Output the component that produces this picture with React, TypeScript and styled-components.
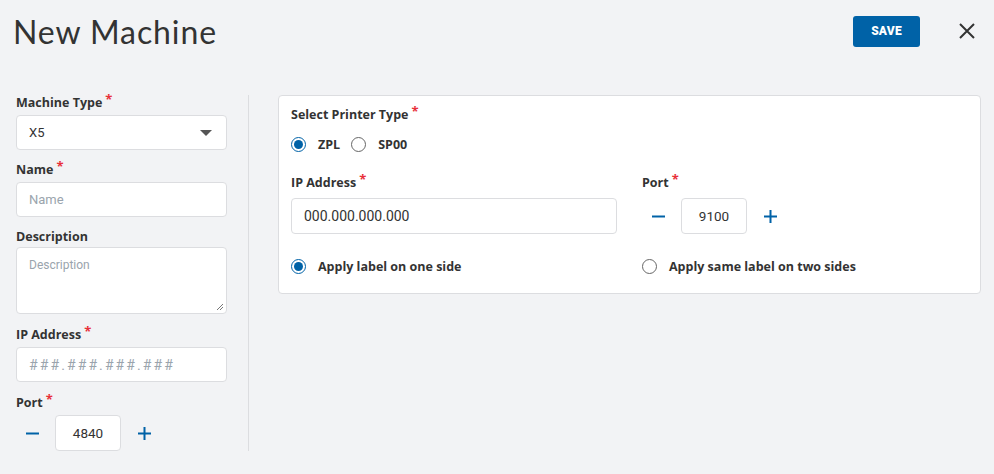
import React from "react";
import styled, { createGlobalStyle } from "styled-components";

const Global = createGlobalStyle`
  html, body { margin: 0; padding: 0; background: #f2f3f5; }
  body { font-family: "Open Sans", "Lato", sans-serif; color: #333; }
  * { box-sizing: border-box; }
`;

const Page = styled.div`
  width: 994px;
  height: 474px;
  background: #f2f3f5;
  padding: 0 0 0 16px;
`;

const Header = styled.div`
  display: flex;
  align-items: center;
  height: 64px;
  margin-left: -3px;
`;

const Title = styled.h1`
  flex: 1;
  margin: 0;
  font-family: "Lato", sans-serif;
  font-weight: 400;
  font-size: 32px;
  letter-spacing: 0.9px;
  color: #333;
  position: relative;
  top: -1px;
`;

const SaveButton = styled.button`
  width: 67px;
  height: 31px;
  border: none;
  border-radius: 3px;
  background: #0062a7;
  color: #fff;
  font-family: "Roboto", sans-serif;
  font-weight: 900;
  font-size: 12px;
  letter-spacing: 0.2px;
  margin-right: 38px;
  margin-top: -2px;
`;

const CloseButton = styled.button`
  width: 18px;
  height: 18px;
  border: none;
  background: transparent;
  padding: 0;
  margin-right: 18px;
  margin-top: -2px;
  display: flex;
  align-items: center;
  justify-content: center;
`;

const Body = styled.div`
  display: flex;
  margin-top: 31px;
`;

const LeftCol = styled.div`
  width: 211px;
  display: flex;
  flex-direction: column;
`;

const Divider = styled.div`
  width: 1px;
  background: #dcdde0;
  margin: 0 29px 0 21px;
  height: 356px;
`;

const Field = styled.div<{ $gap?: number }>`
  display: flex;
  flex-direction: column;
  margin-bottom: ${(p) => p.$gap ?? 12}px;
`;

const Label = styled.label<{ $mb?: number }>`
  font-family: "Open Sans", sans-serif;
  font-weight: 700;
  font-size: 12.5px;
  color: #333;
  line-height: 16px;
  height: 16px;
  margin-bottom: ${(p) => p.$mb ?? 4}px;
  display: flex;
`;

const Req = styled.span`
  color: #e8303a;
  font-size: 13px;
  margin-left: 3px;
  line-height: 10px;
  position: relative;
  top: -1px;
`;

const Box = styled.div<{ $h?: number; $placeholder?: boolean; $mono?: boolean; $fs?: number }>`
  height: ${(p) => p.$h ?? 35}px;
  background: #fff;
  border: 1px solid #dcdde0;
  border-radius: 4px;
  display: flex;
  align-items: center;
  padding: 0 12px;
  font-family: "Roboto", sans-serif;
  font-size: ${(p) => p.$fs ?? 13}px;
  color: ${(p) => (p.$placeholder ? "#9aa4ad" : "#333")};
  letter-spacing: ${(p) => (p.$mono ? "2.1px" : "0")};
  position: relative;
`;

const SelectBox = styled(Box)`
  justify-content: space-between;
  padding-right: 14px;
`;

const TextArea = styled(Box)`
  align-items: flex-start;
  padding-top: 10px;
  font-size: 12px;
`;

const Grip = styled.svg`
  position: absolute;
  right: 2px;
  bottom: 2px;
`;

const Stepper = styled.div`
  display: flex;
  align-items: center;
  height: 36px;
`;

const StepBtn = styled.button<{ $side: "minus" | "plus" }>`
  height: 36px;
  border: none;
  background: transparent;
  padding: ${(p) => (p.$side === "minus" ? "0 16px 0 10px" : "0 0 0 17px")};
  display: flex;
  align-items: center;
`;

const StepValue = styled.div`
  width: 66px;
  height: 36px;
  background: #fff;
  border: 1px solid #dcdde0;
  border-radius: 4px;
  display: flex;
  align-items: center;
  justify-content: center;
  font-family: "Roboto", sans-serif;
  font-size: 13.5px;
  color: #333;
`;

const Card = styled.div`
  width: 703px;
  height: 199px;
  background: #fff;
  border: 1px solid #dcdde0;
  border-radius: 4px;
  padding: 11px 12px 0 12px;
`;

const RadioRow = styled.div`
  display: flex;
  align-items: center;
  height: 24px;
  margin-top: 9px;
`;

const RadioItem = styled.div`
  display: flex;
  align-items: center;
  margin-right: 11px;
  height: 16px;
`;

const RadioCircle = styled.span<{ $checked?: boolean }>`
  width: 15px;
  height: 15px;
  border-radius: 50%;
  border: 1px solid ${(p) => (p.$checked ? "#0062a7" : "#666")};
  display: flex;
  align-items: center;
  justify-content: center;
  margin-right: 12px;
  &::after {
    content: "";
    width: 9px;
    height: 9px;
    border-radius: 50%;
    background: ${(p) => (p.$checked ? "#0062a7" : "transparent")};
  }
`;

const RadioLabel = styled.span`
  font-family: "Open Sans", sans-serif;
  font-weight: 700;
  font-size: 12.5px;
  color: #333;
`;

const Grid = styled.div<{ $top: number }>`
  display: grid;
  grid-template-columns: 326px 326px;
  column-gap: 25px;
  margin-top: ${(p) => p.$top}px;
`;

const Minus = () => (
  <svg width="13" height="13" viewBox="0 0 13 13">
    <path d="M0 6.5h13" stroke="#0062a7" strokeWidth="2" />
  </svg>
);
const Plus = () => (
  <svg width="13" height="13" viewBox="0 0 13 13">
    <path d="M0 6.5h13M6.5 0v13" stroke="#0062a7" strokeWidth="2" />
  </svg>
);

const PortControl = ({ value }: { value: string }) => (
  <Stepper>
    <StepBtn $side="minus">
      <Minus />
    </StepBtn>
    <StepValue>{value}</StepValue>
    <StepBtn $side="plus">
      <Plus />
    </StepBtn>
  </Stepper>
);

export default function App() {
  return (
    <Page>
      <Global />
      <Header>
        <Title>New Machine</Title>
        <SaveButton>SAVE</SaveButton>
        <CloseButton aria-label="close">
          <svg width="16" height="16" viewBox="0 0 16 16">
            <path d="M1 1L15 15M15 1L1 15" stroke="#333" strokeWidth="2" />
          </svg>
        </CloseButton>
      </Header>
      <Body>
        <LeftCol>
          <Field>
            <Label>
              Machine Type<Req>*</Req>
            </Label>
            <SelectBox>
              <span>X5</span>
              <svg width="12" height="6" viewBox="0 0 12 6">
                <path d="M0 0h12L6 6z" fill="#555" />
              </svg>
            </SelectBox>
          </Field>
          <Field>
            <Label>
              Name<Req>*</Req>
            </Label>
            <Box $placeholder>Name</Box>
          </Field>
          <Field $gap={13}>
            <Label $mb={2}>Description</Label>
            <TextArea $h={67} $placeholder>
              Description
              <Grip width="8" height="8" viewBox="0 0 8 8">
                <path d="M7 1L1 7M7 4L4 7" stroke="#777" strokeWidth="1" />
              </Grip>
            </TextArea>
          </Field>
          <Field $gap={13}>
            <Label>
              IP Address<Req>*</Req>
            </Label>
            <Box $placeholder $mono $fs={14}>
              ###.###.###.###
            </Box>
          </Field>
          <Field $gap={0}>
            <Label>
              Port<Req>*</Req>
            </Label>
            <PortControl value="4840" />
          </Field>
        </LeftCol>
        <Divider />
        <Card>
          <Label>
            Select Printer Type<Req>*</Req>
          </Label>
          <RadioRow>
            <RadioItem>
              <RadioCircle $checked />
              <RadioLabel>ZPL</RadioLabel>
            </RadioItem>
            <RadioItem>
              <RadioCircle />
              <RadioLabel>SP00</RadioLabel>
            </RadioItem>
          </RadioRow>
          <Grid $top={19}>
            <Field $gap={0}>
              <Label $mb={7}>
                IP Address<Req>*</Req>
              </Label>
              <Box $h={36} $fs={14}>000.000.000.000</Box>
            </Field>
            <Field $gap={0}>
              <Label $mb={7}>
                Port<Req>*</Req>
              </Label>
              <PortControl value="9100" />
            </Field>
          </Grid>
          <Grid $top={24}>
            <RadioItem>
              <RadioCircle $checked />
              <RadioLabel>Apply label on one side</RadioLabel>
            </RadioItem>
            <RadioItem>
              <RadioCircle />
              <RadioLabel>Apply same label on two sides</RadioLabel>
            </RadioItem>
          </Grid>
        </Card>
      </Body>
    </Page>
  );
}
